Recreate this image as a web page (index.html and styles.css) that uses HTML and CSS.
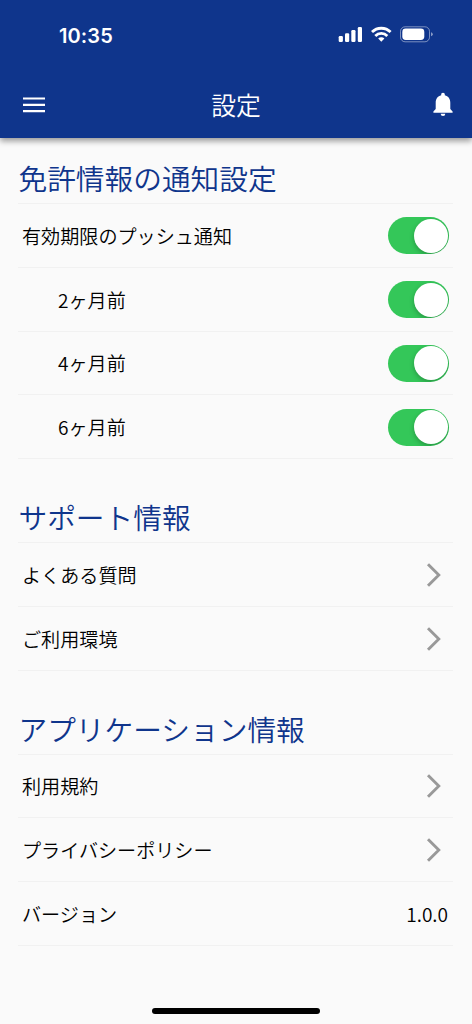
FILE: index.html
```html
<!DOCTYPE html>
<html lang="ja">
<head>
<meta charset="utf-8">
<title>設定</title>
<link rel="stylesheet" href="styles.css">
</head>
<body>
<div class="screen">
  <header class="header">
    <div class="status">
      <span class="time">10:35</span>
      <svg class="status-icons" width="96" height="18" viewBox="0 0 96 18" fill="#fff">
        <rect x="0.7" y="10" width="4.2" height="6" rx="1.2"/>
        <rect x="7" y="7.3" width="4.2" height="8.7" rx="1.2"/>
        <rect x="13.3" y="4" width="4.2" height="12" rx="1.2"/>
        <rect x="19.8" y="1" width="4.2" height="15" rx="1.2"/>
        <g fill="none" stroke="#fff" stroke-width="2.800">
          <path d="M34 6.100a13.200 13.200 0 0 1 18.600 0"/>
          <path d="M37.300 9.900a8.400 8.400 0 0 1 12 0"/>
        </g>
        <path d="M40.200 12.500a4.300 4.300 0 0 1 6.200 0L43.300 15.700z"/>
        <rect x="62.500" y="0.800" width="29" height="15" rx="4.600" fill="none" stroke="#fff" stroke-opacity=".45"/>
        <rect x="64.300" y="2.600" width="22" height="11.400" rx="3.400"/>
        <path d="M93 6.300q1.800.4 1.800 2t-1.800 2z" fill-opacity=".5"/>
      </svg>
    </div>
    <div class="toolbar">
      <svg class="menu" width="22" height="16" viewBox="0 0 22 16" fill="#fff"><path d="M0 .4h22v2.2H0zM0 6.7h22v2.2H0zM0 13h22v2.2H0z"/></svg>
      <h1 class="title">設定</h1>
      <svg class="bell" width="20" height="25" viewBox="0 0 20 25" fill="#fff"><path d="M10 .8c-1.200 0-1.800.8-1.800 1.700v.8C4.700 4.100 2.700 7 2.700 10.700V17L.4 19.400V20.700H19.600V19.400L17.300 17V10.700C17.300 7 15.300 4.100 11.800 3.300V2.500C11.800 1.600 11.200.8 10 .8z"/><path d="M7.700 21.800h4.600a2.300 2.300 0 0 1-4.600 0z"/></svg>
    </div>
  </header>
  <main class="content">
    <section class="section">
      <h2 class="heading">免許情報の通知設定</h2>
      <ul class="list">
        <li class="row"><span>有効期限のプッシュ通知</span><span class="toggle"></span></li>
        <li class="row sub"><span>2ヶ月前</span><span class="toggle"></span></li>
        <li class="row sub"><span>4ヶ月前</span><span class="toggle"></span></li>
        <li class="row sub"><span>6ヶ月前</span><span class="toggle"></span></li>
      </ul>
    </section>
    <section class="section">
      <h2 class="heading">サポート情報</h2>
      <ul class="list">
        <li class="row"><span>よくある質問</span><svg class="chevron" width="16" height="26" viewBox="0 0 16 26"><path d="M2 2.200L12.800 13L2 23.800"/></svg></li>
        <li class="row"><span>ご利用環境</span><svg class="chevron" width="16" height="26" viewBox="0 0 16 26"><path d="M2 2.200L12.800 13L2 23.800"/></svg></li>
      </ul>
    </section>
    <section class="section">
      <h2 class="heading">アプリケーション情報</h2>
      <ul class="list">
        <li class="row"><span>利用規約</span><svg class="chevron" width="16" height="26" viewBox="0 0 16 26"><path d="M2 2.200L12.800 13L2 23.800"/></svg></li>
        <li class="row"><span>プライバシーポリシー</span><svg class="chevron" width="16" height="26" viewBox="0 0 16 26"><path d="M2 2.200L12.800 13L2 23.800"/></svg></li>
        <li class="row"><span>バージョン</span><span class="version">1.0.0</span></li>
      </ul>
    </section>
  </main>
  <div class="home-bar"></div>
</div>
</body>
</html>
```
FILE: styles.css
```css
* { box-sizing: border-box; }
body {
  margin: 0;
  background: #fafafa;
  color: #000;
  font-family: "Noto Sans CJK JP", sans-serif;
  font-weight: 350;
}
.screen {
  display: flex;
  flex-direction: column;
  height: 1024px;
  overflow: hidden;
}
.header {
  flex: none;
  height: 138px;
  background: #0f358c;
  color: #fff;
  box-shadow: 0 3px 6px rgba(0, 0, 0, .4);
}
.status {
  display: flex;
  justify-content: space-between;
  align-items: center;
  height: 71px;
  padding: 0 38.500px 0 59px;
}
.time {
  font: 600 20px/24px Inter, sans-serif;
  letter-spacing: .1px;
}
.status-icons { margin-top: -1px; }
.toolbar {
  display: grid;
  grid-template-columns: 1fr auto 1fr;
  align-items: center;
  height: 67px;
  padding: 0 19px 0 23px;
}
.bell { justify-self: end; }
.title {
  margin: 0 4px 1px 0;
  font-size: 24.800px;
  font-weight: 350;
  line-height: 36px;
}
.content {
  flex: 1;
  padding: 17px 19px 0 18px;
}
.heading {
  height: 48px;
  margin: 0;
  padding-left: .5px;
  color: #0f358c;
  font-size: 28.700px;
  font-weight: 350;
  line-height: 45px;
  white-space: nowrap;
}
.list {
  margin: 0 0 35px;
  padding: 0;
  list-style: none;
  border-top: 1px solid #f1f1f1;
}
.row {
  display: flex;
  justify-content: space-between;
  align-items: center;
  height: 63.750px;
  padding: 1px 4px 0;
  border-bottom: 1px solid #f1f1f1;
  font-size: 19.100px;
  line-height: 28px;
}
.sub { padding-left: 40px; }
.toggle {
  display: flex;
  justify-content: flex-end;
  width: 61px;
  height: 37px;
  padding: 1.500px;
  border-radius: 19px;
  background: #34c759;
  overflow: hidden;
}
.toggle::after {
  content: "";
  width: 34px;
  height: 34px;
  border-radius: 50%;
  background: #fff;
  box-shadow: 0 2px 5px rgba(0, 0, 0, .25);
}
.chevron {
  margin-right: 7px;
  fill: none;
  stroke: #999;
  stroke-width: 2.900;
}
.version { margin-right: 1px; }
.home-bar {
  flex: none;
  width: 168px;
  height: 6px;
  margin: 0 auto 10px;
  border-radius: 3px;
  background: #000;
}
```
